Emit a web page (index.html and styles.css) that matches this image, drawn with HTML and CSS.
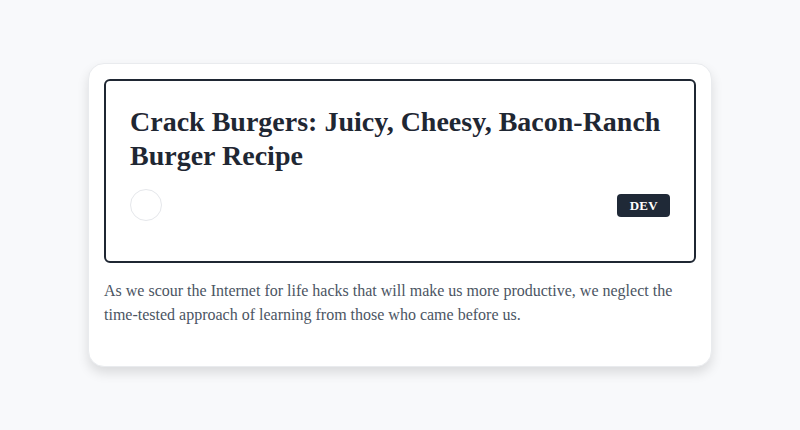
FILE: index.html
```html
<!DOCTYPE html>
<html>
<head>
<meta charset="utf-8">
<link rel="stylesheet" href="styles.css">
</head>
<body>
<div class="page">
  <article class="card">
    <div class="inner">
      <h1 class="title">Crack Burgers: Juicy, Cheesy, Bacon-Ranch Burger Recipe</h1>
      <div class="meta">
        <div class="avatar"></div>
        <span class="badge">DEV</span>
      </div>
    </div>
    <p class="excerpt">As we scour the Internet for life hacks that will make us more productive, we neglect the time-tested approach of learning from those who came before us.</p>
  </article>
</div>
</body>
</html>
```
FILE: styles.css
```css
html, body {
  margin: 0;
  padding: 0;
  background: #f8f9fb;
  font-family: "Liberation Serif", "Times New Roman", serif;
}
.page {
  width: 800px;
  height: 430px;
  display: flex;
  align-items: center;
  justify-content: center;
}
.card {
  width: 624px;
  box-sizing: border-box;
  background: #fff;
  border: 1px solid #e9ebee;
  border-radius: 16px;
  padding: 15px 15px 39px;
  box-shadow: 0 6px 12px rgba(0,0,0,0.12);
}
.inner {
  border: 2px solid #1f2733;
  border-radius: 6px;
  padding: 24px 24px 40px;
  height: 184px;
  box-sizing: border-box;
}
.title {
  margin: 0;
  font-size: 28px;
  line-height: 34px;
  font-weight: bold;
  color: #1f2733;
}
.meta {
  margin-top: 16px;
  display: flex;
  align-items: center;
  justify-content: space-between;
}
.avatar {
  width: 30px;
  height: 30px;
  border: 1px solid #e5e7eb;
  border-radius: 50%;
}
.badge {
  background: #1f2937;
  color: #fff;
  font-weight: bold;
  font-size: 13px;
  letter-spacing: 0.3px;
  line-height: 15px;
  padding: 4px 12px 4px 13px;
  border-radius: 4px;
}
.excerpt {
  margin: 16px 0 0;
  font-size: 16px;
  line-height: 24px;
  color: #4b5563;
}
```
